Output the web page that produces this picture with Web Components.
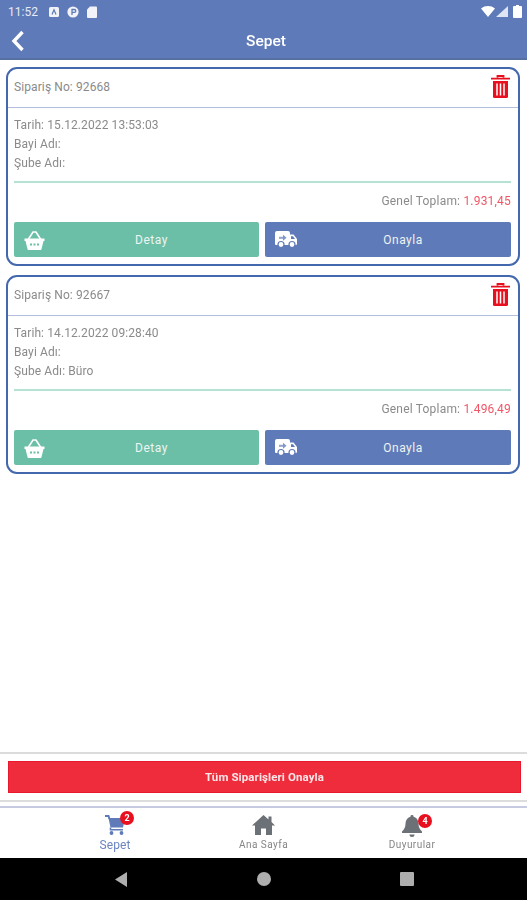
<!DOCTYPE html>
<html lang="tr">
<head>
<meta charset="utf-8">
<title>Sepet</title>
<style>
  html, body { margin: 0; height: 100%; background: #fff; }
  body { font-family: Roboto, "Liberation Sans", sans-serif; }
  app-shell { height: 900px; filter: blur(0.35px); }
</style>
</head>
<body>
<app-shell>
  <app-header slot="header" title-text="Sepet"></app-header>
  <order-card order-no="92668" date="15.12.2022 13:53:03" branch="" total="1.931,45"></order-card>
  <order-card order-no="92667" date="14.12.2022 09:28:40" branch="Büro" total="1.496,49"></order-card>
  <approve-bar slot="approve"></approve-bar>
  <tab-bar slot="tabs"></tab-bar>
  <nav-bar slot="nav"></nav-bar>
</app-shell>

<script>
class AppShell extends HTMLElement {
  connectedCallback() {
    this.attachShadow({ mode: 'open' }).innerHTML = `
    <style>
    :host { display: flex; flex-direction: column; width: 527px; overflow: hidden; }
    main { flex: 1; display: flex; flex-direction: column; gap: 9px; padding: 7px 7px 0 6px; min-height: 0; }
    </style>
    <slot name="header"></slot>
    <main><slot></slot></main>
    <slot name="approve"></slot>
    <slot name="tabs"></slot>
    <slot name="nav"></slot>
    `;
  }
}

class AppHeader extends HTMLElement {
  connectedCallback() {
    this.attachShadow({ mode: 'open' }).innerHTML = `
    <style>
    :host { display: block; background: #5f7ab8; color: #fff; border-bottom: 2px solid #56709f; height: 58px; }
    .status { height: 23px; display: flex; align-items: center; padding: 0 5px 0 8px; gap: 8px; font-size: 12px; color: #e6ebf5; }
    .status .time { margin-right: 3px; margin-top: 1px; }
    .spacer { flex: 1; }
    .right { display: flex; align-items: center; gap: 1px; }
    .bar { height: 35px; display: flex; align-items: center; justify-content: center; position: relative; font-size: 15.5px; font-weight: 500; padding-left: 5px; }
    .back { position: absolute; left: 11px; top: 7px; }
    svg { display: block; }
    </style>
    <div class="status">
      <span class="time">11:52</span>
      <svg width="10" height="10" viewBox="0 0 10 10"><rect width="10" height="10" rx="1.5" fill="#f1f3f9"/><path d="M3 7.500 5 2.800 7 7.500" fill="none" stroke="#5f7ab8" stroke-width="1.200"/></svg>
      <svg width="12" height="12" viewBox="0 0 12 12"><circle cx="6" cy="6" r="5.600" fill="#f1f3f9"/><path d="M5 9V3.500h2.400a1.400 1.400 0 0 1 0 2.800H5" fill="none" stroke="#5f7ab8" stroke-width="1.300"/></svg>
      <svg width="10" height="12" viewBox="0 0 10 12"><path d="M3 .5h6a1 1 0 0 1 1 1v9.500a1 1 0 0 1-1 1H1a1 1 0 0 1-1-1V3.500z" fill="#f1f3f9"/></svg>
      <span class="spacer"></span>
      <span class="right">
        <svg width="14" height="11" viewBox="0 0 14 11"><path d="M0 2.500C4 -.8 10 -.8 14 2.500L7 11z" fill="#fff"/></svg>
        <svg width="12" height="11" viewBox="0 0 12 11"><path d="M12 0v11H0z" fill="#dfe5f2"/></svg>
        <svg width="9" height="13" viewBox="0 0 9 13" style="margin-left:4px"><path d="M3 1V0h3v1h2a1 1 0 0 1 1 1v10a1 1 0 0 1-1 1H1a1 1 0 0 1-1-1V2a1 1 0 0 1 1-1z" fill="#fff"/></svg>
      </span>
    </div>
    <div class="bar">
      <svg class="back" width="14" height="22" viewBox="0 0 14 22"><path d="M11.500 2 3 11l8.500 9" fill="none" stroke="#fff" stroke-width="3.400"/></svg>
      <span>${this.getAttribute('title-text')}</span>
    </div>
    `;
  }
}

class OrderCard extends HTMLElement {
  connectedCallback() {
    const a = n => this.getAttribute(n) || '';
    this.attachShadow({ mode: 'open' }).innerHTML = `
    <style>
    :host { display: block; height: 199px; box-sizing: border-box; border: 2px solid #4468ad; border-radius: 11px; padding: 0 7px 0 6px; color: #8a8a8a; font-size: 12px; letter-spacing: .1px; background: #fff; }
    .head { height: 39px; box-sizing: border-box; margin: 0 -7px 0 -6px; padding: 0 8px 3px 6px; display: flex; align-items: center; justify-content: space-between; border-bottom: 1px solid #b4bedd; }
    .info { padding-top: 10px; height: 63px; border-bottom: 2px solid #b5e2d2; display: flex; flex-direction: column; gap: 5px; line-height: 14px; }
    .total { text-align: right; height: 39px; padding-top: 11px; box-sizing: border-box; line-height: 14px; letter-spacing: .2px; }
    .total b { font-weight: 400; color: #f05566; }
    .btns { display: grid; grid-template-columns: 245px 246px; gap: 6px; }
    svg { display: block; }
    </style>
    <div class="head">
      <span>Sipariş No: ${a('order-no')}</span>
      <svg width="19" height="23" viewBox="0 0 19 23"><path d="M6.500 2.500V1h6v1.500M0 3.700h19" fill="none" stroke="#e8101e" stroke-width="1.800"/><path d="M2 6h15v15.500a1.500 1.500 0 0 1-1.500 1.500h-12A1.500 1.500 0 0 1 2 21.500z" fill="#e8101e"/><path d="M6 8.500v12M9.500 8.500v12M13 8.500v12" stroke="#fff" stroke-width="1.500"/></svg>
    </div>
    <div class="info">
      <span>Tarih: ${a('date')}</span>
      <span>Bayi Adı:</span>
      <span>Şube Adı: ${a('branch')}</span>
    </div>
    <div class="total">Genel Toplam: <b>${a('total')}</b></div>
    <div class="btns">
      <card-button color="#6abfa6" icon="basket">Detay</card-button>
      <card-button color="#5f7ab8" icon="truck">Onayla</card-button>
    </div>
    `;
  }
}

const ICONS = {
  basket: `<svg width="21" height="19" viewBox="0 0 21 19"><path d="M4.500 8 9 1h3l4.500 7" fill="none" stroke="#fff" stroke-width="1.600"/><path d="M.5 7.500h20v2.500h-1l-2 8a1 1 0 0 1-1 1H4.500a1 1 0 0 1-1-1l-2-8h-1z" fill="#fff"/><path d="M6 13.500h9" stroke="#6abfa6" stroke-width="2.200" stroke-dasharray="2 1.500"/></svg>`,
  truck: `<svg width="22" height="17" viewBox="0 0 22 17"><path d="M2 0h11a2 2 0 0 1 2 2v1.500h3.500L22 8v5a1 1 0 0 1-1 1H1a1 1 0 0 1-1-1V2a2 2 0 0 1 2-2z" fill="#fff"/><circle cx="6" cy="13.500" r="3" fill="#fff" stroke="#5f7ab8" stroke-width="1.200"/><circle cx="17" cy="13.500" r="3" fill="#fff" stroke="#5f7ab8" stroke-width="1.200"/><path d="M4 6.800h4" stroke="#8ea2d0" stroke-width="2"/><path d="M8 3.800l3.500 3L8 9.800z" fill="#7f95c8"/><path d="M16 5.200h2l2 2.800h-4z" fill="#5f7ab8"/></svg>`
};

class CardButton extends HTMLElement {
  connectedCallback() {
    this.attachShadow({ mode: 'open' }).innerHTML = `
    <style>
    :host { display: flex; height: 35px; box-sizing: border-box; padding-left: 30px; align-items: center; justify-content: center; position: relative; border-radius: 2px; color: #eef4f3; font-size: 12px; font-weight: 400; letter-spacing: .5px; background: ${this.getAttribute('color')}; }
    .ic { position: absolute; left: 10px; top: 9px; }
    svg { display: block; }
    </style>
    <span class="ic">${ICONS[this.getAttribute('icon')]}</span>
    <slot></slot>
    `;
  }
}

class ApproveBar extends HTMLElement {
  connectedCallback() {
    this.attachShadow({ mode: 'open' }).innerHTML = `
    <style>
    :host { display: block; box-sizing: border-box; height: 50px; border-top: 2px solid #dcdcdc; border-bottom: 2px solid #dcdcdc; padding: 7px 6px 0 8px; }
    div { height: 32px; box-sizing: border-box; border: 1px solid #e8192c; background: #ee2c3c; color: #fbe6e8; display: flex; align-items: center; justify-content: center; font-size: 11.5px; font-weight: 700; letter-spacing: .1px; }
    </style>
    <div>Tüm Siparişleri Onayla</div>
    `;
  }
}

class TabBar extends HTMLElement {
  connectedCallback() {
    this.attachShadow({ mode: 'open' }).innerHTML = `
    <style>
    :host { display: flex; gap: 52.5px; box-sizing: border-box; height: 52px; margin-top: 4px; border-top: 2px solid #c6cbe2; padding: 5px 0 0 67px; background: #fff; }
    </style>
    <tab-item label="Sepet" badge="2" active icon="cart"></tab-item>
    <tab-item label="Ana Sayfa" icon="home"></tab-item>
    <tab-item label="Duyurular" badge="4" icon="bell"></tab-item>
    `;
  }
}

const TAB_ICONS = {
  cart: `<svg width="20" height="20" viewBox="0 0 20 20"><path d="M0 1h3.500l1 3" fill="none" stroke="#5f7ab8" stroke-width="2"/><path d="M3.500 3H20l-2 9.500H5.500z" fill="#5f7ab8"/><path d="M5.500 12.500v2.300h12.500" fill="none" stroke="#5f7ab8" stroke-width="1.500"/><circle cx="6.500" cy="18" r="1.900" fill="#5f7ab8"/><circle cx="16.500" cy="18" r="1.900" fill="#5f7ab8"/></svg>`,
  home: `<svg width="23" height="20" viewBox="0 0 23 20"><path d="M11.500 0 16.500 4.400V1.500h3v5.500L23 10.500h-3V20h-6v-6.500H9V20H3v-9.500H0z" fill="#6b7176"/></svg>`,
  bell: `<svg width="20" height="22" viewBox="0 0 20 22" style="margin-top:2px"><path d="M10 0a1.500 1.500 0 0 1 1.500 1.700C15 2.700 16.500 5.600 16.500 8.800c0 3.700 1.500 5.900 3.500 7.700V18H0v-1.500c2-1.800 3.500-4 3.500-7.700 0-3.200 1.500-6.100 5-7.100A1.500 1.500 0 0 1 10 0z" fill="#6b7176"/><path d="M7.500 19.500h5a2.500 2.500 0 0 1-5 0z" fill="#6b7176"/></svg>`
};

class TabItem extends HTMLElement {
  connectedCallback() {
    const active = this.hasAttribute('active');
    const badge = this.getAttribute('badge');
    const icon = this.getAttribute('icon');
    this.attachShadow({ mode: 'open' }).innerHTML = `
    <style>
    :host { display: flex; flex-direction: column; align-items: center; width: 96px; color: ${active ? '#6b85c0' : '#858585'}; font-size: ${active ? 12 : 10}px; }
    .wrap { position: relative; height: 24px; display: flex; align-items: center; }
    .badge { position: absolute; left: calc(100% - ${icon === 'bell' ? 4 : 5}px); top: ${icon === 'bell' ? 1 : -2}px; width: 14px; height: 14px; border-radius: 50%; background: #e8101e; color: #fff; font-size: 9px; font-weight: 700; line-height: 14px; text-align: center; letter-spacing: 0; }
    svg { display: block; }
    .label { margin-top: 1px; line-height: 14px; letter-spacing: ${active ? .1 : .45}px; }
    </style>
    <div class="wrap">${TAB_ICONS[icon]}${badge ? `<span class="badge">${badge}</span>` : ''}</div>
    <span class="label">${this.getAttribute('label')}</span>
    `;
  }
}

class NavBar extends HTMLElement {
  connectedCallback() {
    this.attachShadow({ mode: 'open' }).innerHTML = `
    <style>
    :host { display: flex; height: 42px; background: #000; align-items: center; justify-content: center; gap: 129.5px; padding-left: 2px; }
    svg { display: block; }
    </style>
    <svg width="12" height="15" viewBox="0 0 12 15"><path d="M12 0v15L0 7.500z" fill="#aeaeae"/></svg>
    <svg width="14" height="14" viewBox="0 0 14 14"><circle cx="7" cy="7" r="7" fill="#aeaeae"/></svg>
    <svg width="14" height="14" viewBox="0 0 14 14"><rect width="14" height="14" rx="1" fill="#aeaeae"/></svg>
    `;
  }
}

customElements.define('app-shell', AppShell);
customElements.define('app-header', AppHeader);
customElements.define('order-card', OrderCard);
customElements.define('card-button', CardButton);
customElements.define('approve-bar', ApproveBar);
customElements.define('tab-item', TabItem);
customElements.define('tab-bar', TabBar);
customElements.define('nav-bar', NavBar);
</script>
</body>
</html>
